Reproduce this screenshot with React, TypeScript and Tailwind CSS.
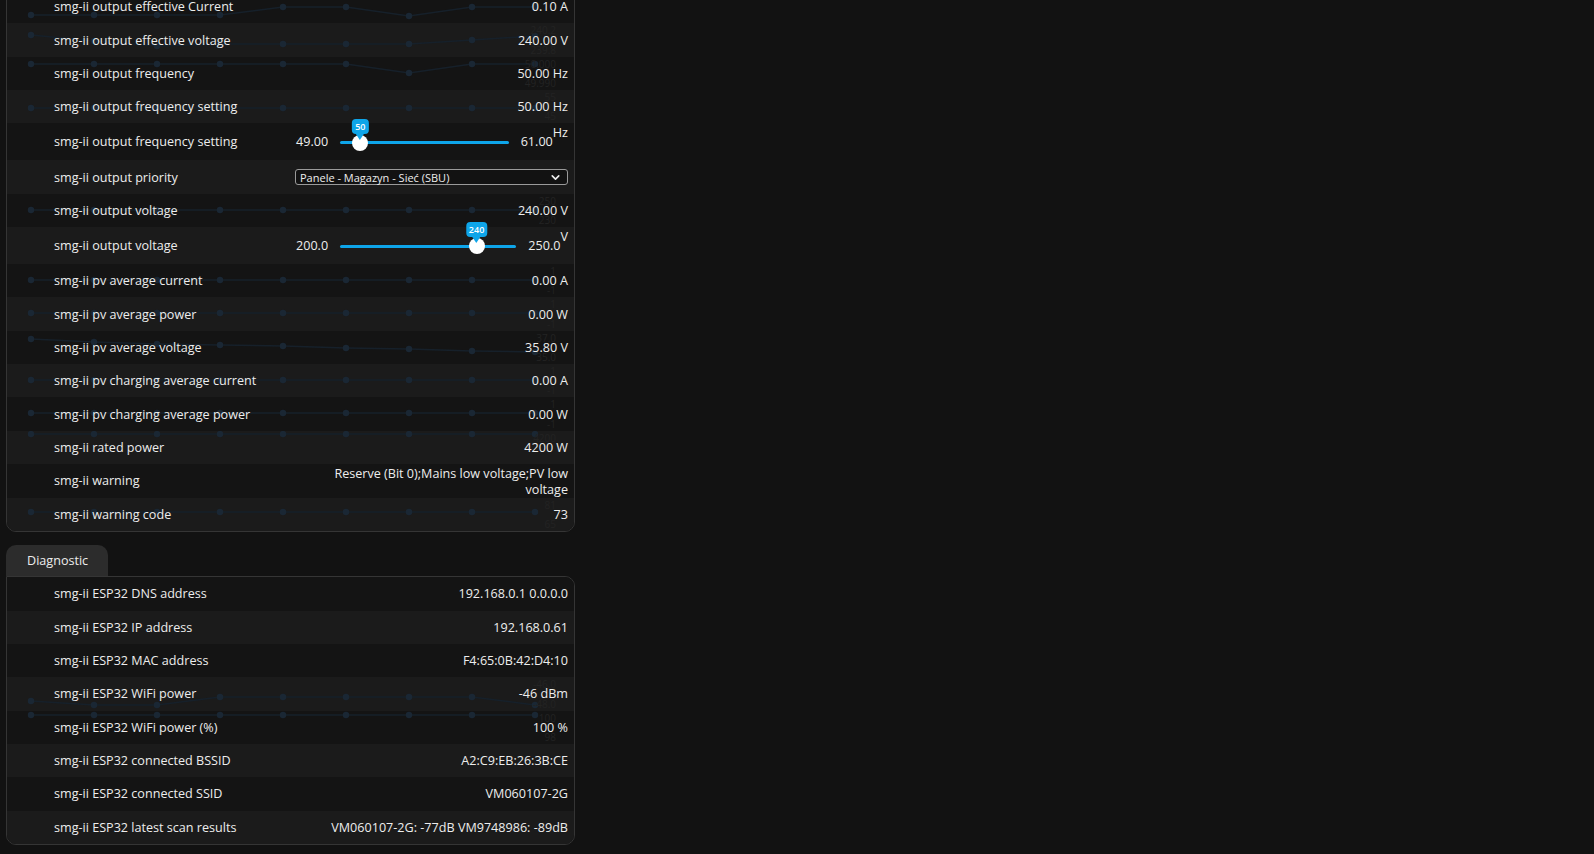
import type { ReactNode } from 'react';
import { ChevronDown } from 'lucide-react';

type Chart = { ys: number[]; hi?: string; lo?: string };

type Row =
    | { kind: 'value'; label: string; value: ReactNode; chart?: Chart; tall?: boolean }
    | {
          kind: 'slider';
          label: string;
          min: number;
          max: number;
          value: number;
          minText: string;
          maxText: string;
          unit: string;
      }
    | { kind: 'select'; label: string; value: string };

const inverterRows: Row[] = [
    { kind: 'value', label: 'smg-ii output effective Current', value: '0.10 A', chart: { ys: [25, 25, 25, 25, 17, 17, 26, 17, 17], hi: '0' } },
    { kind: 'value', label: 'smg-ii output effective voltage', value: '240.00 V', chart: { ys: [12, 18, 23, 21, 21, 21, 21, 17, 13], hi: '240.2', lo: '239.8' } },
    { kind: 'value', label: 'smg-ii output frequency', value: '50.00 Hz', chart: { ys: [7, 7, 7, 7, 7, 7, 16, 7, 7], hi: '50.000', lo: '49.990' } },
    { kind: 'value', label: 'smg-ii output frequency setting', value: '50.00 Hz', chart: { ys: [18, 18, 18, 18, 18, 18, 18, 18, 18], hi: '55', lo: '45' } },
    { kind: 'slider', label: 'smg-ii output frequency setting', min: 49, max: 61, value: 50, minText: '49.00', maxText: '61.00', unit: 'Hz' },
    { kind: 'select', label: 'smg-ii output priority', value: 'Panele - Magazyn - Sieć (SBU)' },
    { kind: 'value', label: 'smg-ii output voltage', value: '240.00 V', chart: { ys: [16, 16, 16, 16, 16, 16, 16, 16, 16], hi: '250', lo: '230' } },
    { kind: 'slider', label: 'smg-ii output voltage', min: 200, max: 250, value: 240, minText: '200.0', maxText: '250.0', unit: 'V' },
    { kind: 'value', label: 'smg-ii pv average current', value: '0.00 A', chart: { ys: [16, 16, 16, 16, 16, 16, 16, 16, 16], hi: '1', lo: '-1' } },
    { kind: 'value', label: 'smg-ii pv average power', value: '0.00 W', chart: { ys: [16, 16, 16, 16, 16, 16, 16, 16, 16], hi: '1', lo: '-1' } },
    { kind: 'value', label: 'smg-ii pv average voltage', value: '35.80 V', chart: { ys: [8, 11, 13, 14, 15, 17, 18, 20, 21], hi: '37.0', lo: '35.0' } },
    { kind: 'value', label: 'smg-ii pv charging average current', value: '0.00 A', chart: { ys: [16, 16, 16, 16, 16, 16, 16, 16, 16], hi: '1', lo: '-1' } },
    { kind: 'value', label: 'smg-ii pv charging average power', value: '0.00 W', chart: { ys: [16, 16, 16, 16, 16, 16, 16, 16, 16], hi: '1', lo: '-1' } },
    { kind: 'value', label: 'smg-ii rated power', value: '4200 W', chart: { ys: [3, 3, 3, 3, 3, 3, 3, 3, 3], hi: '4200' } },
    {
        kind: 'value',
        label: 'smg-ii warning',
        tall: true,
        value: (
            <>
                Reserve (Bit 0);Mains low voltage;PV low
                <br />
                voltage
            </>
        ),
    },
    { kind: 'value', label: 'smg-ii warning code', value: '73', chart: { ys: [14, 14, 14, 14, 14, 14, 14, 14, 14], hi: '81', lo: '65' } },
];

const diagnosticRows: Row[] = [
    { kind: 'value', label: 'smg-ii ESP32 DNS address', value: '192.168.0.1 0.0.0.0' },
    { kind: 'value', label: 'smg-ii ESP32 IP address', value: '192.168.0.61' },
    { kind: 'value', label: 'smg-ii ESP32 MAC address', value: 'F4:65:0B:42:D4:10' },
    { kind: 'value', label: 'smg-ii ESP32 WiFi power', value: '-46 dBm', chart: { ys: [24, 28, 28, 20, 20, 20, 20, 20, 28], hi: '-46.0', lo: '-48.0' } },
    { kind: 'value', label: 'smg-ii ESP32 WiFi power (%)', value: '100 %', chart: { ys: [4, 4, 4, 4, 4, 4, 4, 4, 4], hi: '100', lo: '98' } },
    { kind: 'value', label: 'smg-ii ESP32 connected BSSID', value: 'A2:C9:EB:26:3B:CE' },
    { kind: 'value', label: 'smg-ii ESP32 connected SSID', value: 'VM060107-2G' },
    { kind: 'value', label: 'smg-ii ESP32 latest scan results', value: 'VM060107-2G: -77dB VM9748986: -89dB' },
];

// faint history line drawn behind a sensor row
function Sparkline({ chart }: { chart: Chart }) {
    const xs = chart.ys.map((_, i) => 24 + i * 63);
    const d = chart.ys.map((y, i) => `${i === 0 ? 'M' : 'L'}${xs[i]} ${y}`).join(' ');
    return (
        <>
            <svg className="pointer-events-none absolute inset-0 h-full w-full">
                <path d={d} fill="none" stroke="#16202a" strokeWidth="1.5" />
                {chart.ys.map((y, i) => (
                    <circle key={i} cx={xs[i]} cy={y} r="3.2" fill="#1a2734" />
                ))}
            </svg>
            {chart.hi && (
                <span className="pointer-events-none absolute right-[18px] top-[2px] text-[10px] leading-none text-[#232323]">
                    {chart.hi}
                </span>
            )}
            {chart.lo && (
                <span className="pointer-events-none absolute right-[18px] bottom-[2px] text-[10px] leading-none text-[#232323]">
                    {chart.lo}
                </span>
            )}
        </>
    );
}

function RangeControl({ row }: { row: Extract<Row, { kind: 'slider' }> }) {
    const frac = (row.value - row.min) / (row.max - row.min);
    return (
        <div className="flex w-[272px] items-center">
            <span className="w-[44px] shrink-0">{row.minText}</span>
            <div className="relative h-[3px] flex-1 rounded-full bg-[#0ea5e9]">
                <div className="absolute top-1/2 h-0 w-0" style={{ left: `calc(7.5px + ${frac} * (100% - 15px))` }}>
                    <div className="absolute left-[-8px] top-[-8px] h-[16px] w-[16px] rounded-full bg-white" />
                    <div className="absolute bottom-[3px] left-0 flex -translate-x-1/2 flex-col items-center">
                        <div className="flex h-[15px] min-w-[15px] items-center justify-center rounded-[4px] bg-[#0ea5e9] px-[3px] text-[9px] font-semibold leading-none text-white">
                            {row.value}
                        </div>
                        <div className="h-0 w-0 border-x-[4px] border-t-[6px] border-x-transparent border-t-[#0ea5e9]" />
                    </div>
                </div>
            </div>
            <div className="ml-[12px] flex shrink-0 items-center">
                <span>{row.maxText}</span>
                <span className="mb-[18px]">{row.unit}</span>
            </div>
        </div>
    );
}

function DataRow({ row, index }: { row: Row; index: number }) {
    const bg = index % 2 === 0 ? 'bg-[#141414]' : 'bg-[#1b1b1b]';
    const height = row.kind === 'slider' ? 'h-[37px]' : row.kind === 'value' && row.tall ? 'h-[34px]' : 'h-[33.33px]';
    return (
        <div className={`relative flex items-center pl-[47px] pr-[6px] pt-[2px] ${bg} ${height}`}>
            {row.kind === 'value' && row.chart && <Sparkline chart={row.chart} />}
            <span className="relative flex-1 whitespace-nowrap">{row.label}</span>
            {row.kind === 'value' && (
                <span className={`relative w-[272px] text-right ${row.tall ? 'leading-[16px]' : ''}`}>{row.value}</span>
            )}
            {row.kind === 'slider' && <RangeControl row={row} />}
            {row.kind === 'select' && (
                <div className="-mt-[1px] flex h-[16px] w-[273px] items-center justify-between rounded-[3px] border border-[#9a9a9a] bg-[#121212] pl-[4px] pr-[5px] text-[11px] leading-none">
                    <span>{row.value}</span>
                    <ChevronDown size={13} strokeWidth={3} />
                </div>
            )}
        </div>
    );
}

export default function App() {
    return (
        <div className="min-h-screen overflow-hidden bg-[#121212] font-['Open_Sans','Noto_Sans',sans-serif] text-[12.6px] text-[#ededed]">
            <div className="-mt-[11px] ml-[6px] w-[569px] overflow-hidden rounded-b-[10px] border border-[#353535]">
                {inverterRows.map((row, i) => (
                    <DataRow key={i} row={row} index={i} />
                ))}
            </div>

            <div className="ml-[6px] mt-[13px] flex h-[31px] w-[102px] items-center rounded-t-[10px] bg-[#2c2c2c] pl-[21px] pt-[2px]">
                Diagnostic
            </div>
            <div className="ml-[6px] w-[569px] overflow-hidden rounded-b-[10px] rounded-tr-[10px] border border-[#353535]">
                {diagnosticRows.map((row, i) => (
                    <DataRow key={i} row={row} index={i} />
                ))}
            </div>
        </div>
    );
}
